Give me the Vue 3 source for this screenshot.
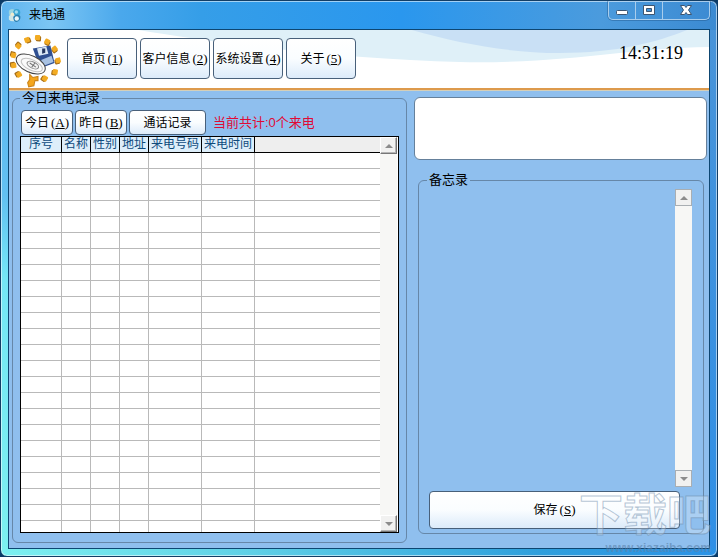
<script setup>
import { ref } from 'vue'

const menu = [
  { label: '首页', key: '1' },
  { label: '客户信息', key: '2' },
  { label: '系统设置', key: '4' },
  { label: '关于', key: '5' },
]
const columns = [
  { name: '序号', cls: 'c-no' },
  { name: '名称', cls: 'c-short' },
  { name: '性别', cls: 'c-short' },
  { name: '地址', cls: 'c-short' },
  { name: '来电号码', cls: 'c-long' },
  { name: '来电时间', cls: 'c-long' },
]
const rows = 24
const memo = ref('')
// Badges of the ring around the logo
const dots = [
  [18, 6], [28, 4], [37, 8], [44, 15], [47, 26], [44, 37], [34, 43], [9, 39], [4, 30], [4, 20], [9, 11],
]
</script>

<template>
  <div class="window">
    <header class="titlebar">
      <svg class="app-icon" viewBox="0 0 16 16" aria-hidden="true">
        <path d="M1 3 Q4 0 7 2 L7 8 Q3 10 1 7Z" fill="#9ad4e2" />
        <circle cx="10" cy="5" r="4" fill="#3aa5d2" />
        <circle cx="9.500" cy="4.500" r="2" fill="#9fdcf0" />
        <path d="M1 9 Q5 5 8 9 L8 15 Q3 16 1 13Z" fill="#cfe6e6" />
        <path d="M6 10 Q10 6 14 9 Q15 14 10 16 Q6 16 6 10Z" fill="#2b7fae" />
        <circle cx="5" cy="7" r="2" fill="#f0eacb" />
        <circle cx="10" cy="12" r="2.500" fill="#e8f6fb" />
      </svg>
      <h1>来电通</h1>
      <div class="controls">
        <button type="button" class="min" aria-label="最小化">
          <svg viewBox="0 0 14 12"><rect x="1.500" y="6.500" width="11" height="4" rx="1" fill="#fff" stroke="#3d5672" /></svg>
        </button>
        <button type="button" class="max" aria-label="最大化">
          <svg viewBox="0 0 14 12"><path d="M1.500 1.500h11v9h-11z M4.500 4.500v3h5v-3z" fill="#fff" fill-rule="evenodd" stroke="#3d5672" /></svg>
        </button>
        <button type="button" class="close" aria-label="关闭">
          <svg viewBox="0 0 14 12"><path d="M1.500 1.500h4l1.500 2 1.500-2h4l-3 4.500 3 4.500h-4l-1.500-2-1.500 2h-4l3-4.500z" fill="#fff" stroke="#3d5672" /></svg>
        </button>
      </div>
    </header>

    <div class="client">
      <div class="banner">
        <svg class="waves" viewBox="0 0 702 58" preserveAspectRatio="none" aria-hidden="true">
          <path d="M130 0 C220 15 350 30 452 32 C560 34 620 18 702 17 V0Z" fill="#dff0f8" />
          <path d="M404 0 C450 13 500 23 552 23 C610 23 650 12 680 0Z" fill="#c9e0f5" />
        </svg>
        <svg class="logo" viewBox="0 0 56 56" aria-hidden="true">
          <g v-for="(d, i) in dots" :key="i" :transform="`translate(${d[0]} ${d[1]}) rotate(${i * 24 - 20})`">
            <rect x="-2" y="-2" width="5" height="5" rx="1" fill="#a76e18" />
            <rect x="-3" y="-3" width="5" height="5" rx="1" fill="#f2ab22" />
          </g>
          <path d="M23 14 L40 11 L44 28 L30 33Z" fill="#2f4f91" />
          <path d="M27 14 L36 12 L38 19 L29 21Z" fill="#dce9f6" />
          <path d="M32 14 l3 0 l0 4 l-3 1z" fill="#25365f" />
          <path d="M31 25 L41 21 L43 27 L33 31Z" fill="#a9c2e2" />
          <ellipse cx="21" cy="29" rx="15" ry="8" transform="rotate(25 21 29)" fill="#fafafa" stroke="#444" />
          <ellipse cx="22" cy="30" rx="11" ry="5" transform="rotate(25 22 30)" fill="none" stroke="#c4c4c4" />
          <ellipse cx="23" cy="30" rx="6" ry="3" transform="rotate(25 23 30)" fill="#f2f2f2" stroke="#888" />
          <path d="M20 28 l6 4 M25 28 l-3 4" stroke="#777" />
          <path d="M20 39 l3 3 5-1 0 4 -3 0 -1 5 -5 1 -1-4 2-3z" fill="#f4a51c" stroke="#c98218" />
        </svg>
        <nav class="menu">
          <button v-for="m in menu" :key="m.key" type="button">{{ m.label }}<span class="key">(<u>{{ m.key }}</u>)</span></button>
        </nav>
        <time class="clock">14:31:19</time>
      </div>

      <main class="body">
        <fieldset class="calls">
          <legend>今日来电记录</legend>
          <div class="toolbar">
            <button type="button">今日<span class="key">(<u>A</u>)</span></button>
            <button type="button">昨日<span class="key">(<u>B</u>)</span></button>
            <button type="button" class="wide">通话记录</button>
            <p class="total">当前共计:0个来电</p>
          </div>
          <div class="grid">
            <div class="grid-view">
              <table>
                <thead>
                  <tr>
                    <th v-for="c in columns" :key="c.name" :class="c.cls">{{ c.name }}</th>
                    <td class="rest"></td>
                  </tr>
                </thead>
                <tbody>
                  <tr v-for="r in rows" :key="r">
                    <td v-for="c in columns" :key="c.name"></td>
                    <td class="rest"></td>
                  </tr>
                </tbody>
              </table>
            </div>
            <div class="scroll raised">
              <button type="button" aria-label="向上滚动"><i class="up"></i></button>
              <button type="button" aria-label="向下滚动"><i class="down"></i></button>
            </div>
          </div>
        </fieldset>

        <section class="side">
          <div class="caller"></div>
          <fieldset class="memo">
            <legend>备忘录</legend>
            <div class="memo-area">
              <textarea v-model="memo" aria-label="备忘录"></textarea>
              <div class="scroll flat">
                <button type="button" aria-label="向上滚动"><i class="up"></i></button>
                <button type="button" aria-label="向下滚动"><i class="down"></i></button>
              </div>
            </div>
            <button type="button" class="save">保存<span class="key">(<u>S</u>)</span></button>
          </fieldset>
        </section>
      </main>
    </div>

    <div class="watermark">
      <span class="brand">下载吧</span>
      <span class="site">www.xiazaiba.com</span>
    </div>
  </div>
</template>

<style>
body {
  background: #0b3a66;
}
</style>

<style scoped>
* {
  box-sizing: border-box;
}
.window {
  position: relative;
  display: flex;
  flex-direction: column;
  height: 100vh;
  padding: 0 7px 7px;
  overflow: hidden;
  border: 1px solid #123e66;
  border-radius: 7px;
  font: 12px/16px "Liberation Sans", "Noto Sans CJK SC", sans-serif;
  color: #000;
  background:
    linear-gradient(90deg, #5fb4ee 0, #7cc6f4 50px, #4aa8ec 120px, #359ee8 200px, #2a97ee 400px, #4b9bdd 600px, #3b8ad2 100%) top / 100% 29px no-repeat,
    linear-gradient(90deg, #7cf0f0, #5fd0e6 35%, #2f9fdc 75%, #2b92e6) bottom / 100% 8px no-repeat,
    linear-gradient(#5cb4f0, #62c0f2 35%, #74e6f6 50%, #7cf0f0) left / 50% 100% no-repeat,
    linear-gradient(#4a94d8, #2f8fe6) right / 50% 100% no-repeat;
  box-shadow: inset 0 0 0 1px rgba(255, 255, 255, 0.55);
}
button {
  padding: 0;
  font: inherit;
  color: inherit;
  white-space: nowrap;
}
.titlebar {
  display: flex;
  flex: none;
  align-items: flex-start;
  height: 28px;
}
.app-icon {
  width: 14px;
  height: 14px;
  margin: 7px 7px 0 0;
}
h1 {
  margin: 6px 0 0;
  font-size: 12px;
  font-weight: 400;
}
.controls {
  display: flex;
  height: 19px;
  margin-left: auto;
  border: 1px solid #a9cdec;
  border-top: 0;
  border-radius: 0 0 5px 5px;
  box-shadow: 0 0 0 1px rgba(30, 80, 130, 0.4);
}
.controls button {
  display: flex;
  align-items: center;
  justify-content: center;
  width: 27px;
  border: 0;
  border-right: 1px solid #a9cdec;
  background: none;
}
.controls .close {
  width: 46px;
  border-right: 0;
}
.controls svg {
  width: 14px;
  height: 12px;
}
.client {
  display: flex;
  flex: 1;
  flex-direction: column;
  min-height: 0;
  border: 1px solid #0d4672;
  background: #8fbfee;
}
.banner {
  position: relative;
  display: flex;
  flex: none;
  align-items: flex-start;
  height: 60px;
  padding: 8px 26px 0 0;
  border-bottom: 2px solid #dd9a4c;
  background: #fff;
}
.waves {
  position: absolute;
  inset: 0;
  width: 100%;
  height: 100%;
}
.logo {
  position: relative;
  width: 58px;
  height: 58px;
  margin-top: -4px;
}
.menu {
  position: relative;
  display: flex;
  gap: 3px;
}
.menu button,
.toolbar button,
.save {
  border: 1px solid #48607a;
  border-radius: 4px;
  background: linear-gradient(#fff, #fafdff 50%, #dcebfa);
}
.menu button {
  width: 70px;
  height: 41px;
}
.key {
  margin-left: 2px;
  font: 13px/16px "Liberation Serif", serif;
}
.clock {
  position: relative;
  margin: 4px 0 0 auto;
  font: 18px/22px "Liberation Serif", serif;
}
.body {
  display: grid;
  flex: 1;
  grid-template: minmax(0, 1fr) / minmax(0, 395fr) minmax(0, 293fr);
  gap: 7px;
  min-height: 0;
  padding: 0 2px 5px 3px;
  border-top: 1px solid #d5cfb8;
}
fieldset {
  display: flex;
  flex-direction: column;
  min-width: 0;
  margin: 0;
  border: 1px solid #6687a8;
  border-radius: 6px;
}
legend {
  padding: 0 2px;
  font-size: 13px;
  line-height: 14px;
}
.calls {
  padding: 5px 7px 9px;
}
.toolbar {
  display: flex;
  flex: none;
  gap: 2px;
  align-items: center;
  padding-left: 1px;
}
.toolbar button {
  width: 52px;
  height: 25px;
}
.toolbar .wide {
  width: 77px;
}
.total {
  margin: 0 0 0 5px;
  font-size: 13px;
  color: #e00a35;
}
.grid {
  display: flex;
  flex: 1;
  min-height: 0;
  margin-top: 1px;
  padding-right: 1px;
  border: 1px solid #000;
  background: #fff;
}
.grid-view {
  flex: 1;
  overflow: hidden;
}
table {
  width: 100%;
  table-layout: fixed;
  border-spacing: 0;
}
th,
td {
  height: 16px;
  padding: 0;
  border-right: 1px solid #b9b9b9;
  border-bottom: 1px solid #b9b9b9;
  line-height: 15px;
}
th {
  border-color: #000;
  font-weight: 400;
  color: #0d4a7c;
  white-space: nowrap;
  background: #ddeefa;
}
.rest {
  border-right: 0;
}
thead .rest {
  border-bottom-color: #000;
  background: #eee;
}
.c-no {
  width: 41px;
}
.c-short {
  width: 29px;
}
.c-long {
  width: 53px;
}
.scroll {
  display: flex;
  flex: none;
  flex-direction: column;
  justify-content: space-between;
  width: 17px;
  background: #f7f7f5;
}
.scroll button {
  display: flex;
  align-items: center;
  justify-content: center;
  height: 17px;
  border: 1px solid #a9aeb2;
  background: #f1f1f0;
}
.scroll.raised button {
  border-color: #fff #777 #777 #fff;
  box-shadow: inset -1px -1px #b5b5b5;
}
.up,
.down {
  border: 4px solid transparent;
}
.up {
  border-top: 0;
  border-bottom-color: #8c8c8c;
}
.down {
  border-bottom: 0;
  border-top-color: #8c8c8c;
}
.side {
  display: flex;
  flex-direction: column;
  min-width: 0;
  padding-top: 6px;
}
.caller {
  flex: none;
  height: 63px;
  border: 1px solid #65809b;
  border-radius: 6px;
  background: #fff;
}
.memo {
  flex: 1;
  min-height: 0;
  margin: 13px 3px 9px 4px;
  padding: 2px 11px 4px 8px;
}
.memo-area {
  display: flex;
  flex: 1;
  min-height: 0;
}
textarea {
  flex: 1;
  min-width: 0;
  padding: 2px;
  border: 0;
  outline: 0;
  resize: none;
  background: transparent;
  font: inherit;
}
.save {
  height: 38px;
  margin: 4px 12px 0 2px;
}
.watermark {
  position: absolute;
  right: 6px;
  bottom: 2px;
  display: flex;
  flex-direction: column;
  align-items: flex-end;
  pointer-events: none;
  font-weight: 700;
  color: rgba(255, 255, 255, 0.25);
  -webkit-text-stroke: 1px rgba(110, 140, 170, 0.5);
}
.brand {
  font-size: 44px;
  line-height: 52px;
}
.site {
  font-size: 12px;
  line-height: 12px;
  -webkit-text-stroke: 0;
  color: rgba(90, 130, 170, 0.6);
}
</style>
